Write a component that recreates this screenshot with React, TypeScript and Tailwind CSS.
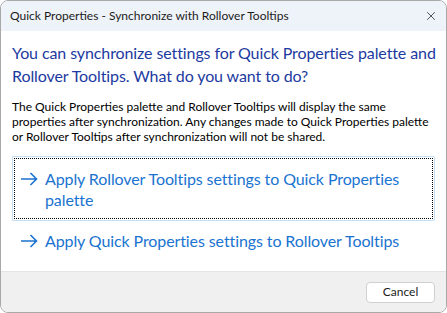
import { X } from 'lucide-react';

function ArrowIcon() {
  return (
    <svg className="w-[18px] h-[14px] shrink-0" viewBox="0 0 18 14" fill="none" stroke="currentColor" strokeWidth={1.6}>
      <path d="M1 7h15.5M10.5 1l6 6-6 6" />
    </svg>
  );
}

interface CommandLinkProps {
  lines: string[];
  focused?: boolean;
}

function CommandLink({ lines, focused }: CommandLinkProps) {
  return (
    <button
      className={
        focused
          ? 'w-full text-left border border-[#c4dff4] p-px rounded-[1px]'
          : 'w-full text-left border border-transparent p-px'
      }
    >
      <div
        className={
          focused
            ? 'flex items-start gap-[7px] pl-[5px] pr-2 pt-[9px] pb-[8px] border border-dotted border-black'
            : 'flex items-start gap-[7px] pl-[5px] pr-2 pt-[6px] pb-[8px] border border-transparent'
        }
      >
        <span className="h-[21px] flex items-center text-[#1a73d0]">
          <ArrowIcon />
        </span>
        <span className="text-[16px] leading-[21px] text-[#1a73d0] whitespace-nowrap tracking-[-0.1px]">
          {lines.map((l, i) => (
            <span key={i} className="block">
              {l}
            </span>
          ))}
        </span>
      </div>
    </button>
  );
}

export default function App() {
  return (
    <div
      className="w-[447px] h-[313px] flex flex-col bg-white border border-[#a8a8a8] rounded-[8px] overflow-hidden text-black"
      style={{ fontFamily: '"Segoe UI", Lato, Arial, sans-serif' }}
    >
      {/* Title bar */}
      <div className="h-[30px] shrink-0 flex items-center justify-between bg-[#eef3f9] pl-[9px] pr-[8px]">
        <span className="text-[12px] text-[#1b1b1b]">Quick Properties - Synchronize with Rollover Tooltips</span>
        <X className="w-[14px] h-[14px] text-[#222]" strokeWidth={1.3} />
      </div>

      {/* Content */}
      <div className="flex-1 px-[11px] pt-[10px]">
        <h1 className="text-[16px] leading-[23px] text-[#1c3aa0] whitespace-nowrap tracking-[-0.1px]">
          You can synchronize settings for Quick Properties palette and
          <br />
          Rollover Tooltips. What do you want to do?
        </h1>
        <p className="mt-[12px] text-[12px] leading-[15px] whitespace-nowrap">
          The Quick Properties palette and Rollover Tooltips will display the same
          <br />
          properties after synchronization. Any changes made to Quick Properties palette
          <br />
          or Rollover Tooltips after synchronization will not be shared.
        </p>
        <div className="mt-[12px] flex flex-col">
          <CommandLink focused lines={['Apply Rollover Tooltips settings to Quick Properties', 'palette']} />
          <CommandLink lines={['Apply Quick Properties settings to Rollover Tooltips']} />
        </div>
      </div>

      {/* Footer */}
      <div className="h-[41px] shrink-0 flex items-center justify-end bg-[#f0f0f0] border-t border-[#e4e4e4] pr-[11px]">
        <button className="w-[69px] h-[21px] bg-white border border-[#d0d0d0] rounded-[4px] text-[12px] text-[#1b1b1b]">
          Cancel
        </button>
      </div>
    </div>
  );
}
